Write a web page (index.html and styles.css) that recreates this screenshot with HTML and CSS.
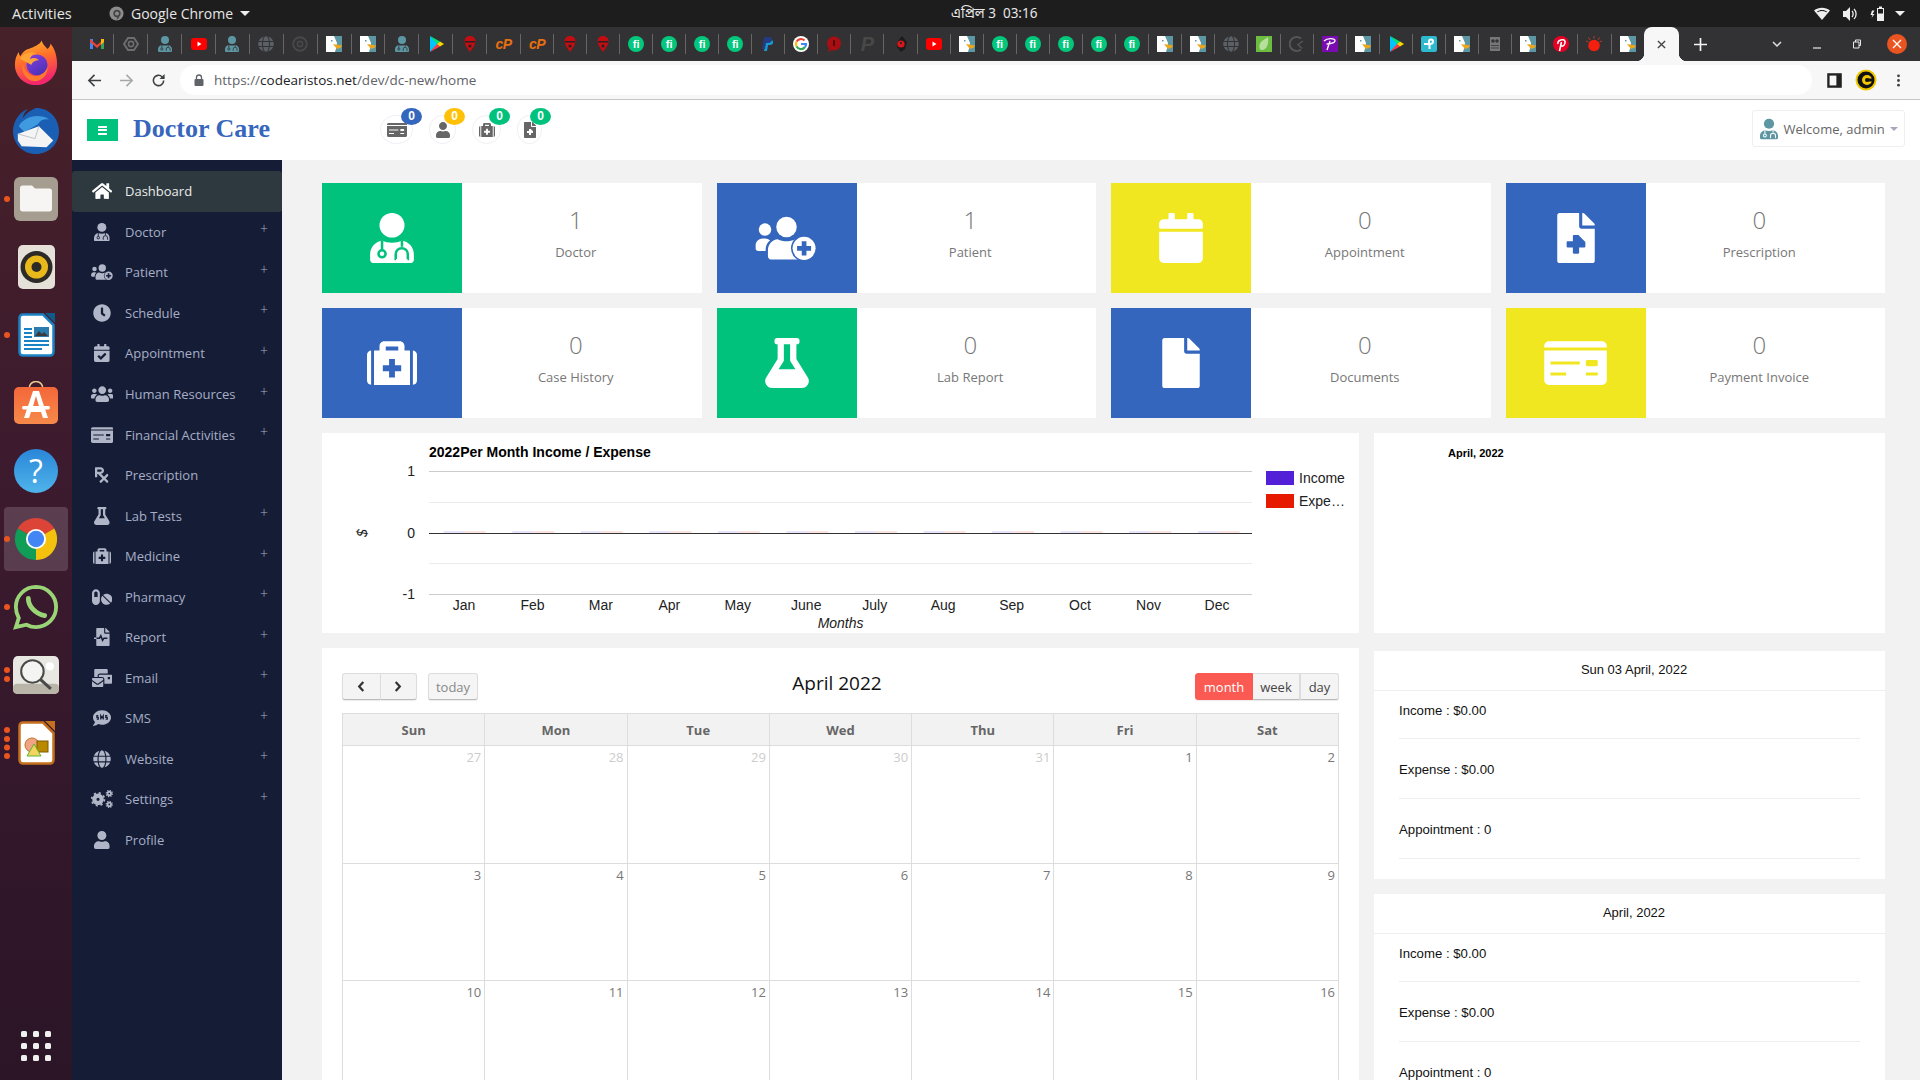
FILE: index.html
```html
<!DOCTYPE html>
<html lang="en">
<head>
<meta charset="utf-8">
<title>Doctor Care</title>
<link rel="stylesheet" href="styles.css">
</head>
<body>
<svg class="sprite" aria-hidden="true">
  <defs>
    <linearGradient id="g-fox" x1="0" y1="0" x2="0.3" y2="1"><stop offset="0" stop-color="#ffc02b"/><stop offset=".5" stop-color="#ff6f2b"/><stop offset="1" stop-color="#f3266e"/></linearGradient>
    <linearGradient id="g-globe" x1="0" y1="0" x2="0.6" y2="1"><stop offset="0" stop-color="#8a3fe0"/><stop offset="1" stop-color="#4c32b8"/></linearGradient>
    <linearGradient id="g-bag" x1="0" y1="0" x2="0" y2="1"><stop offset="0" stop-color="#f4673a"/><stop offset="1" stop-color="#f58a4a"/></linearGradient>
    <linearGradient id="g-help" x1="0" y1="0" x2="0" y2="1"><stop offset="0" stop-color="#2a86d8"/><stop offset="1" stop-color="#4fb4ea"/></linearGradient>
    <pattern id="p-bars" x="53.15" y="0" width="68.55" height="2" patternUnits="userSpaceOnUse"><rect width="21" height="2" fill="#e9e4fa"/><rect x="21" width="21" height="2" fill="#fbe3df"/></pattern>
  </defs>
  <symbol id="i-user" viewBox="0 0 448 512"><path d="M224 256c70.7 0 128-57.3 128-128S294.7 0 224 0 96 57.3 96 128s57.3 128 128 128zm89.6 32h-16.7c-22.2 10.2-46.9 16-72.9 16s-50.6-5.8-72.9-16h-16.7C60.2 288 0 348.2 0 422.4V464c0 26.5 21.5 48 48 48h352c26.5 0 48-21.5 48-48v-41.6c0-74.2-60.2-134.4-134.4-134.4z"/></symbol>
  <symbol id="i-doc" viewBox="0 0 448 512"><ellipse cx="224" cy="126" rx="128" ry="126"/><path d="M0 424c0-72 50-130 122-140 58 26 146 26 204 0 72 10 122 68 122 140v58c0 16-14 30-30 30H30c-16 0-30-14-30-30z"/><g fill="none" style="stroke:var(--cut)" stroke-width="26"><path d="M122 284v92"/><circle cx="122" cy="418" r="36"/><path d="M326 284v62"/><path d="M266 472h-4v-50a60 60 0 0 1 124 0v50h-4"/></g></symbol>
  <symbol id="i-home" viewBox="0 0 576 512"><path d="M280.37 148.26L96 300.11V464a16 16 0 0 0 16 16l112.06-.29a16 16 0 0 0 15.92-16V368a16 16 0 0 1 16-16h64a16 16 0 0 1 16 16v95.64a16 16 0 0 0 16 16.05L464 480a16 16 0 0 0 16-16V300L295.67 148.26a12.19 12.19 0 0 0-15.3 0zM571.6 251.47L488 182.56V44.05a12 12 0 0 0-12-12h-56a12 12 0 0 0-12 12v72.61L318.47 43a48 48 0 0 0-61 0L4.34 251.47a12 12 0 0 0-1.6 16.9l25.5 31A12 12 0 0 0 45.15 301l235.22-193.74a12.19 12.19 0 0 1 15.3 0L530.9 301a12 12 0 0 0 16.9-1.6l25.5-31a12 12 0 0 0-1.7-16.93z"/></symbol>
  <symbol id="i-clock" viewBox="0 0 512 512"><path d="M256,8C119,8,8,119,8,256S119,504,256,504,504,393,504,256,393,8,256,8Zm92.49,313h0l-20,25a16,16,0,0,1-22.49,2.5h0l-67-49.72a40,40,0,0,1-15-31.23V112a16,16,0,0,1,16-16h32a16,16,0,0,1,16,16V256l58,42.5A16,16,0,0,1,348.49,321Z"/></symbol>
  <symbol id="i-users" viewBox="0 0 640 512"><path d="M96 224c35.3 0 64-28.7 64-64s-28.7-64-64-64-64 28.7-64 64 28.7 64 64 64zm448 0c35.3 0 64-28.7 64-64s-28.7-64-64-64-64 28.7-64 64 28.7 64 64 64zm32 32h-64c-17.6 0-33.5 7.1-45.1 18.6 40.3 22.1 68.9 62 75.1 109.4h66c17.7 0 32-14.3 32-32v-32c0-35.3-28.7-64-64-64zm-256 0c61.9 0 112-50.1 112-112S381.9 32 320 32 208 82.1 208 144s50.1 112 112 112zm76.8 32h-8.3c-20.8 10-43.9 16-68.5 16s-47.6-6-68.5-16h-8.3C179.6 288 128 339.6 128 403.2V432c0 26.5 21.5 48 48 48h288c26.5 0 48-21.5 48-48v-28.8c0-63.6-51.6-115.2-115.2-115.2zm-223.7-13.4C161.5 263.1 145.6 256 128 256H64c-35.3 0-64 28.7-64 64v32c0 17.7 14.3 32 32 32h65.9c6.3-47.4 34.9-87.3 75.2-109.4z"/></symbol>
  <symbol id="i-flask" viewBox="0 0 448 512"><path d="M437.2 403.5L320 215V64h8c13.3 0 24-10.7 24-24V24c0-13.3-10.7-24-24-24H120c-13.3 0-24 10.7-24 24v16c0 13.3 10.7 24 24 24h8v151L10.8 403.5C-18.5 450.6 15.3 512 70.9 512h306.2c55.7 0 89.4-61.5 60.1-108.5zM137.9 320l48.2-77.6c3.7-5.2 5.8-11.6 5.8-18.4V64h64v160c0 6.9 2.2 13.2 5.8 18.4l48.2 77.6h-172z"/></symbol>
  <symbol id="i-kit" viewBox="0 0 512 512"><path fill-rule="evenodd" d="M72 128h56V80c0-26 22-48 48-48h160c26 0 48 22 48 48v48h56v352H72zM192 88v40h128V88zM226 216v64h-64v60h64v64h60v-64h64v-60h-64v-64zM0 176a48 48 0 0 1 42-47v350a48 48 0 0 1-42-47zM512 176a48 48 0 0 0-42-47v350a48 48 0 0 0 42-47z"/></symbol>
  <symbol id="i-file" viewBox="0 0 384 512"><path d="M224 136V0H24C10.7 0 0 10.7 0 24v464c0 13.3 10.7 24 24 24h336c13.3 0 24-10.7 24-24V160H248c-13.2 0-24-10.8-24-24zm160-14.1v6.1H256V0h6.1c6.4 0 12.5 2.5 17 7l97.9 98c4.5 4.5 7 10.6 7 16.9z"/></symbol>
  <symbol id="i-filemed" viewBox="0 0 384 512"><path d="M377 105L279.1 7c-4.5-4.5-10.6-7-17-7H256v128h128v-6.1c0-6.3-2.5-12.4-7-16.9zM224 136V0H24C10.7 0 0 10.7 0 24v464c0 13.3 10.7 24 24 24h336c13.3 0 24-10.7 24-24V160H248c-13.2 0-24-10.8-24-24zm64 160v48c0 4.4-3.6 8-8 8h-56v56c0 4.4-3.6 8-8 8h-48c-4.4 0-8-3.6-8-8v-56h-56c-4.4 0-8-3.6-8-8v-48c0-4.4 3.6-8 8-8h56v-56c0-4.4 3.6-8 8-8h48c4.4 0 8 3.6 8 8z"/></symbol>
  <symbol id="i-cal" viewBox="0 0 448 512"><path d="M12 192h424c6.6 0 12 5.4 12 12v260c0 26.5-21.5 48-48 48H48c-26.5 0-48-21.5-48-48V204c0-6.6 5.4-12 12-12zm436-44v-36c0-26.5-21.5-48-48-48h-48V12c0-6.6-5.4-12-12-12h-40c-6.6 0-12 5.4-12 12v52H160V12c0-6.6-5.4-12-12-12h-40c-6.6 0-12 5.4-12 12v52H48C21.5 64 0 85.5 0 112v36c0 6.6 5.4 12 12 12h424c6.6 0 12-5.4 12-12z"/></symbol>
  <symbol id="i-calcheck" viewBox="0 0 448 512"><path d="M436 160H12c-6.627 0-12-5.373-12-12v-36c0-26.51 21.49-48 48-48h48V12c0-6.627 5.373-12 12-12h40c6.627 0 12 5.373 12 12v52h128V12c0-6.627 5.373-12 12-12h40c6.627 0 12 5.373 12 12v52h48c26.51 0 48 21.49 48 48v36c0 6.627-5.373 12-12 12zM12 192h424c6.627 0 12 5.373 12 12v260c0 26.51-21.49 48-48 48H48c-26.51 0-48-21.49-48-48V204c0-6.627 5.373-12 12-12zm333.296 95.947l-28.169-28.398c-4.667-4.705-12.265-4.736-16.97-.068L194.12 364.665l-45.98-46.352c-4.667-4.705-12.266-4.736-16.971-.068l-28.397 28.17c-4.705 4.667-4.736 12.265-.068 16.97l82.601 83.269c4.667 4.705 12.265 4.736 16.97.068l142.953-141.805c4.705-4.667 4.736-12.265.068-16.97z"/></symbol>
  <symbol id="i-card" viewBox="0 0 640 512"><path fill-rule="evenodd" d="M48 32h544c26 0 48 22 48 48v16H0V80c0-26 22-48 48-48zM0 128h640v304c0 26-22 48-48 48H48c-26 0-48-22-48-48zM64 240v32h300v-32zM440 224c-8 0-14 6-14 14v36c0 8 6 14 14 14h94c8 0 14-6 14-14v-36c0-8-6-14-14-14zM64 352v32h160v-32zM426 352v32h122v-32z"/></symbol>
  <symbol id="i-patient" viewBox="0 0 640 512"><circle cx="100" cy="170" r="64"/><path d="M4 330c0-40 34-70 72-70h24c22 0 38 8 52 20-30 24-46 60-46 100v10H30c-14 0-26-12-26-26z"/><circle cx="320" cy="144" r="105"/><path d="M130 380c0-60 46-110 100-112 56 28 120 28 180 0h10c20 0 40 6 50 14v194H160c-16 0-30-14-30-30z"/><circle cx="500" cy="362" r="134" style="fill:var(--cut)"/><circle cx="500" cy="362" r="118"/><path style="fill:var(--cut)" d="M476 290h48v48h48v48h-48v48h-48v-48h-48v-48h48z"/></symbol>
  <symbol id="i-rx" viewBox="0 0 384 512"><path d="M301.26 352l78.06-78.06c6.25-6.25 6.25-16.38 0-22.63l-22.63-22.63c-6.25-6.25-16.38-6.25-22.63 0L256 306.74l-83.96-83.96C219.31 216.8 256 176.89 256 128c0-53.02-42.98-96-96-96H16C7.16 32 0 39.16 0 48v256c0 8.84 7.16 16 16 16h32c8.84 0 16-7.16 16-16v-80h18.75l128 128-78.06 78.06c-6.25 6.25-6.25 16.38 0 22.63l22.63 22.63c6.25 6.25 16.38 6.25 22.63 0L256 397.25l78.06 78.06c6.25 6.25 16.38 6.25 22.63 0l22.63-22.63c6.25-6.25 6.25-16.38 0-22.63L301.26 352zM64 96h96c17.64 0 32 14.36 32 32s-14.36 32-32 32H64V96z"/></symbol>
  <symbol id="i-pills" viewBox="0 0 576 512"><path d="M112 32C50.1 32 0 82.1 0 144v224c0 61.9 50.1 112 112 112s112-50.1 112-112V144c0-61.9-50.1-112-112-112zm48 224H64V144c0-26.5 21.5-48 48-48s48 21.5 48 48v112zm139.7-29.7c-3.5-3.5-9.4-3.1-12.3.8-45.3 62.5-40.4 150.1 15.9 206.4 56.3 56.3 143.9 61.2 206.4 15.9 4-2.9 4.3-8.8.8-12.3L299.7 226.3zm229.8-19c-56.3-56.3-143.9-61.2-206.4-15.9-4 2.9-4.3 8.8-.8 12.3l210.8 210.8c3.5 3.5 9.4 3.1 12.3-.8 45.3-62.6 40.5-150.1-15.9-206.4z"/></symbol>
  <symbol id="i-report" viewBox="0 0 448 512"><path transform="translate(64)" d="M224 136V0H24C10.7 0 0 10.7 0 24v464c0 13.3 10.7 24 24 24h336c13.3 0 24-10.7 24-24V160H248c-13.2 0-24-10.8-24-24zm160-14.1v6.1H256V0h6.1c6.4 0 12.5 2.5 17 7l97.9 98c4.5 4.5 7 10.6 7 16.9z"/><path fill="none" style="stroke:var(--cut)" stroke-width="44" d="M64 290h90l40-70 50 130 40-60h96"/><path d="M0 268h70v44H0z"/></symbol>
  <symbol id="i-mail" viewBox="0 0 576 512"><path d="M160 448c-25.6 0-51.2-22.4-64-32-64-44.8-83.2-60.8-96-70.4V480c0 17.67 14.33 32 32 32h256c17.67 0 32-14.33 32-32V345.6c-12.8 9.6-32 25.6-96 70.4-12.8 9.6-38.4 32-64 32zm128-192H32c-17.67 0-32 14.33-32 32v16c25.6 19.2 22.4 19.2 115.2 86.4 9.6 6.4 28.8 25.6 44.8 25.6s35.2-19.2 44.8-22.4c92.8-67.2 89.6-67.2 115.2-86.4V288c0-17.67-14.33-32-32-32zm256-96H224c-17.67 0-32 14.33-32 32v32h96c33.21 0 60.59 25.42 63.71 57.82l.29-.22V416h192c17.67 0 32-14.33 32-32V192c0-17.67-14.33-32-32-32zm-32 128h-64v-64h64v64zm-352-96c0-35.29 28.71-64 64-64h224V32c0-17.67-14.33-32-32-32H96C78.33 0 64 14.33 64 32v192h96v-32z"/></symbol>
  <symbol id="i-sms" viewBox="0 0 512 512"><path d="M256 32C114.6 32 0 125.1 0 240c0 49.6 21.4 95 57 130.7C44.5 421.1 2.7 466 2.2 466.5c-2.2 2.3-2.8 5.7-1.5 8.7S4.8 480 8 480c66.3 0 116-31.8 140.6-51.4 32.7 12.3 69 19.4 107.4 19.4 141.4 0 256-93.1 256-208S397.4 32 256 32z"/><path fill="none" style="stroke:var(--cut)" stroke-width="34" d="M150 190h-40v50h40v50h-44M220 300V190l36 60 36-60v110M406 190h-44v50h44v50h-44"/></symbol>
  <symbol id="i-globe" viewBox="0 0 496 512"><path d="M336.5 160C322 70.7 287.8 8 248 8s-74 62.7-88.5 152h177zM152 256c0 22.2 1.2 43.5 3.3 64h185.3c2.1-20.5 3.3-41.8 3.3-64s-1.2-43.5-3.3-64H155.3c-2.1 20.5-3.3 41.8-3.3 64zm324.7-96c-28.6-67.9-86.5-120.4-158-141.6 24.4 33.8 41.2 84.7 50 141.6h108zM177.2 18.4C105.8 39.6 47.8 92.1 19.3 160h108c8.7-56.9 25.5-107.8 49.9-141.6zM487.4 192H372.7c2.1 21 3.3 42.5 3.3 64s-1.2 43-3.3 64h114.6c5.5-20.5 8.6-41.8 8.6-64s-3.1-43.5-8.5-64zM120 256c0-21.5 1.2-43 3.3-64H8.6C3.2 212.5 0 233.8 0 256s3.2 43.5 8.6 64h114.6c-2-21-3.2-42.5-3.2-64zm39.5 96c14.5 89.3 48.7 152 88.5 152s74-62.7 88.5-152h-177zm159.3 141.6c71.4-21.2 129.4-73.7 158-141.6h-108c-8.8 56.9-25.6 107.8-50 141.6zM19.3 352c28.6 67.9 86.5 120.4 158 141.6-24.4-33.8-41.2-84.7-50-141.6h-108z"/></symbol>
  <symbol id="i-cogs" viewBox="0 0 640 512"><circle cx="200" cy="265" r="105" fill="none" stroke="currentColor" stroke-width="120"/><circle cx="200" cy="265" r="180" fill="none" stroke="currentColor" stroke-width="52" stroke-dasharray="60 81"/><circle cx="520" cy="100" r="50" fill="none" stroke="currentColor" stroke-width="52"/><circle cx="520" cy="100" r="88" fill="none" stroke="currentColor" stroke-width="34" stroke-dasharray="34 35"/><circle cx="520" cy="410" r="50" fill="none" stroke="currentColor" stroke-width="52"/><circle cx="520" cy="410" r="88" fill="none" stroke="currentColor" stroke-width="34" stroke-dasharray="34 35"/></symbol>

  <symbol id="f-gmail" viewBox="0 0 16 16"><path fill="#4285f4" d="M1 3h3v10H1z"/><path fill="#34a853" d="M12 3h3v10h-3z"/><path fill="#ea4335" d="M1 3l7 6 7-6v3L8 12 1 6z"/><path fill="#fbbc05" d="M12 3l3 0v3l-3 2.5z"/></symbol>
  <symbol id="f-hex" viewBox="0 0 16 16"><path fill="none" stroke="#6d6d6d" stroke-width="2" d="M5 2h6l4 6-4 6H5L1 8z"/><circle cx="8" cy="8" r="2.6" fill="none" stroke="#6d6d6d" stroke-width="1.6"/></symbol>
  <symbol id="f-yt" viewBox="0 0 16 16"><rect y="2" width="16" height="12" rx="3" fill="#f00"/><path fill="#fff" d="M6.5 5.5l4 2.5-4 2.5z"/></symbol>
  <symbol id="f-cdark" viewBox="0 0 16 16"><circle cx="8" cy="8" r="6.8" fill="none" stroke="#484848" stroke-width="2"/><circle cx="8" cy="8" r="2.6" fill="none" stroke="#484848" stroke-width="1.6"/></symbol>
  <symbol id="f-duck" viewBox="0 0 16 16"><rect width="16" height="16" fill="#fff"/><path d="M8 0h8v16H9l1.500-5L11 7z"/><path fill="#eda51a" d="M7 8l9 1.500-1 2-4 1.500z"/><rect x="5" y="4" width="1.500" height="1.500"/></symbol>
  <symbol id="f-play" viewBox="0 0 16 16"><path fill="#00c4ff" d="M2 0l8 8-8 8z"/><path fill="#00e676" d="M2 0l10 5.500L9 8z"/><path fill="#ff3a44" d="M2 16l10-5.500L9 8z"/><path fill="#ffd500" d="M12 5.500L16 8l-4 2.500L9 8z"/></symbol>
  <symbol id="f-red" viewBox="0 0 16 16"><path fill="#c30d12" d="M8 0c3.500 0 5.500 2.500 5.500 5 0 3-2.500 7-5.500 11-3-4-5.500-8-5.500-11C2.500 2.500 4.500 0 8 0z"/><path fill="#222" d="M3 5h10v1.500H3z"/><circle cx="8" cy="10" r="1.500" fill="#222"/></symbol>
  <symbol id="f-pay" viewBox="0 0 16 16"><path fill="#179bd7" d="M6 4h5c3 0 3 5-1 5H8l-1 6H4z"/><path fill="#253b80" d="M4 1h6c3 0 3 6-2 6H6l-1 6H2z"/></symbol>
  <symbol id="f-g" viewBox="0 0 16 16"><circle cx="8" cy="8" r="8" fill="#fff"/><path fill="none" stroke="#ea4335" stroke-width="2.200" d="M3.600 5.500A5 5 0 0 1 11.500 4.500"/><path fill="none" stroke="#fbbc05" stroke-width="2.200" d="M3.600 5.500a5 5 0 0 0 0 5"/><path fill="none" stroke="#34a853" stroke-width="2.200" d="M3.600 10.500a5 5 0 0 0 8.400.500"/><path fill="none" stroke="#4285f4" stroke-width="2.200" d="M12 11a5 5 0 0 0 1-3H8"/></symbol>
  <symbol id="f-redc" viewBox="0 0 16 16"><circle cx="8" cy="7.500" r="7" fill="#a80e12"/><path d="M7 4h2v6H7z" fill="#58090b"/><path d="M3 12l-1 4 4-2z" fill="#a80e12"/></symbol>
  <symbol id="f-eye" viewBox="0 0 16 16"><path fill="#1c1c1c" d="M9 0l5 6-2 7-4 3-4-5 1-6z"/><circle cx="8" cy="8" r="3.600" fill="#d8161b"/><circle cx="8" cy="7" r="1" fill="#222"/></symbol>
  <symbol id="f-leaf" viewBox="0 0 16 16"><rect width="16" height="16" fill="#6dbd43"/><path fill="#b7df9d" d="M12 1c1 6-1 13-6 13-3 0-3.500-5-1-8 2-2.500 5-3 7-5z"/></symbol>
  <symbol id="f-c" viewBox="0 0 16 16"><path fill="none" stroke="#555" stroke-width="2" d="M12 2.500a7 7 0 1 0 0 11"/><path fill="none" stroke="#555" stroke-width="1.500" d="M14 5L9 8.500l4 4"/></symbol>
  <symbol id="f-pp" viewBox="0 0 16 16"><rect width="16" height="16" fill="#7a0bb0"/><path fill="none" stroke="#fff" stroke-width="1.300" d="M2 5c3-3 11-3 11-.5S8 8 4.500 8M8 5L5 14"/></symbol>
  <symbol id="f-tp" viewBox="0 0 16 16"><rect width="16" height="16" rx="2" fill="#2eb9ce"/><path fill="none" stroke="#fff" stroke-width="2" d="M3 8h5V5.500a2 2 0 1 1 4 0C12 7.500 10 8 8.500 8v5"/></symbol>
  <symbol id="f-owl" viewBox="0 0 16 16"><path fill="#777" d="M3 1h10v14H3z"/><circle cx="6" cy="5" r="1.800" fill="#333"/><circle cx="10" cy="5" r="1.800" fill="#333"/><path fill="#444" d="M4 9h8v1H4zM4 11.500h8v1H4z"/></symbol>
  <symbol id="f-pin" viewBox="0 0 16 16"><circle cx="8" cy="8" r="8" fill="#e60023"/><path fill="none" stroke="#fff" stroke-width="1.600" d="M6.500 15L8.500 6M5 8c-1-4 6-6 7-2.500 .6 2.500-1.500 5-3.500 4.500"/></symbol>
  <symbol id="f-bug" viewBox="0 0 16 16"><circle cx="8" cy="9.500" r="5.800" fill="#f51f0f"/><path stroke="#b83a22" stroke-width="1" d="M8 0v2.500M2.500 1.500l1.500 2.500M13.500 1.500L12 4M0 5l2.500 1M16 5l-2.500 1"/></symbol>
</svg>

<div class="desktop">
  <header class="topbar">
    <span class="tb-activities">Activities</span>
    <span class="tb-app">
      <svg class="tb-appicon" viewBox="0 0 16 16"><circle cx="8" cy="8" r="7.500" fill="#8c8c8c"/><circle cx="8.500" cy="8" r="3" fill="none" stroke="#444" stroke-width="1.800"/><path d="M9 11l-1 4 3-3z" fill="#444"/></svg>
      Google Chrome
      <span class="caret-white"></span>
    </span>
    <span class="tb-clock">এপ্রিল 3&nbsp;&nbsp;03:16</span>
    <span class="tb-tray">
      <svg class="tray-icon" viewBox="0 0 16 16"><path fill="#eee" d="M8 14L0 4.500C4.500 .8 11.500 .8 16 4.500z"/><path fill="#1d1d1d" d="M8 4c-2 0-3.700.6-5 1.500l.6.700C5 5.400 6.400 5 8 5s3 .4 4.400 1.200l.6-.7C11.700 4.600 10 4 8 4z"/></svg>
      <svg class="tray-icon" viewBox="0 0 16 16"><path fill="#eee" d="M1 5h3l4-4v14l-4-4H1z"/><path fill="none" stroke="#eee" stroke-width="1.300" d="M10 5c1.500 1.500 1.500 4.500 0 6M12 3c2.800 2.500 2.800 7.500 0 10"/></svg>
      <svg class="tray-icon" viewBox="0 0 16 16"><path fill="#eee" d="M2 4.500h2.500L2.500 8h2l-3 4 1-3H.5zM7 2h7v13H7z"/><rect x="9" y="0.500" width="3" height="2" fill="#eee"/><rect x="8" y="3" width="5" height="4.500" fill="#1d1d1d"/></svg>
      <span class="caret-white caret-tray"></span>
    </span>
  </header>

  <div class="workspace">
    <nav class="dock">
      <div class="dock-item">
        <svg class="dock-svg" viewBox="0 0 48 48"><path fill="url(#g-fox)" d="M24 47C11 47 2 37 2 26c0-7 2.500-11 4-13.500.2 2 .8 3.500 1.800 4.500C10 12 14 9.500 17 9c4-1.500 11-4 13-8.500 .5 3.500 3 5.500 6 9 2.500-2 3-4 3-5.500 4 4 7 11.500 7 21.500 0 11.500-9 21.500-22 21.500z"/><circle cx="25" cy="26" r="11" fill="url(#g-globe)"/><path fill="#ffa436" d="M7 19c5-6 12-7 18-5-4 0-7 3-7 6 3-2 7-1 9 1-4 0-7 2-8 5-2-2-7-3-12-7z"/><path fill="#ff7a2d" d="M10 24c2 10 10 15 17 13 5-1.500 8-5 9-9 1 7-5 15-13 15-9 0-15-9-13-19z"/></svg>
      </div>
      <div class="dock-item">
        <svg class="dock-svg" viewBox="0 0 48 48"><path fill="#1a5fb4" d="M24 0C38 0 48 11 48 24c0 14-11 24-24 24C10 48 0 37 0 24 0 13 8 3 16 1c-4 3-5 6-6 10 4-6 9-9 14-11z"/><path fill="#3f9ae0" d="M6 19C12 9 26 5 38 12c-6-1-10 1-12 5L12 25z"/><path fill="#f4f4f4" d="M5 27l22-8 15 15-7 7-26-1-4-6z"/><path fill="none" stroke="#b9c2cc" stroke-width="1" d="M5 27l18 5 4-13"/></svg>
      </div>
      <div class="dock-item">
        <span class="dock-dot dot-a"></span>
        <svg class="dock-svg dock-44" viewBox="0 0 44 44"><rect width="44" height="44" rx="6" fill="#a59d8f"/><path fill="#f6f5f3" d="M6 11c0-1.500 1-2.500 2.500-2.500H18l3 3h14.500c1.500 0 2.500 1 2.500 2.500v18c0 1.500-1 2.500-2.500 2.500h-27C7 34.500 6 33.500 6 32z"/></svg>
      </div>
      <div class="dock-item">
        <svg class="dock-svg dock-tall" viewBox="0 0 37 44"><rect width="37" height="44" rx="5" fill="#e6e1d8"/><circle cx="18.500" cy="22" r="16" fill="#2d2b28"/><circle cx="18.500" cy="22" r="11.500" fill="#e9b91b"/><circle cx="18.500" cy="22" r="5" fill="#2d2b28"/></svg>
      </div>
      <div class="dock-item">
        <span class="dock-dot dot-a"></span>
        <svg class="dock-svg dock-tall" viewBox="0 0 37 44"><path fill="#fff" stroke="#1b82c4" stroke-width="2.500" d="M1.500 5c0-2 1.500-3.500 3.500-3.500h20L35.500 12v27c0 2-1.500 3.500-3.500 3.500H5c-2 0-3.500-1.500-3.500-3.500z"/><path fill="#0f5a8a" d="M27 0l10 10V0z"/><path fill="#1b82c4" d="M6 15h8v2H6zM6 19h8v2H6zM6 23h8v2H6zM6 27h25v2H6zM6 31h25v2H6zM6 35h18v2H6z"/><rect x="16" y="14" width="15" height="10" fill="#2a7cae"/><path fill="#3a3a3a" d="M17 23l4-5 3 3 2-2 4 4z"/></svg>
      </div>
      <div class="dock-item">
        <svg class="dock-svg dock-44" viewBox="0 0 44 44"><path fill="none" stroke="#f2c98f" stroke-width="1.500" d="M15 8c0-10 14-10 14 0"/><rect y="6" width="44" height="37" rx="5" fill="url(#g-bag)"/><path fill="#fff" d="M19 10h6l9 27h-5l-2-6H17l-2 6h-5zM22 15l-3.500 12h7z"/><rect x="8" y="25" width="28" height="3.500" rx="1.700" fill="#fff"/></svg>
      </div>
      <div class="dock-item">
        <svg class="dock-svg dock-44" viewBox="0 0 44 44"><circle cx="22" cy="22" r="22" fill="url(#g-help)"/><text x="22" y="34" text-anchor="middle" class="help-mark">?</text></svg>
      </div>
      <div class="dock-item">
        <span class="dock-dot dot-a"></span>
        <div class="dock-tile">
          <svg class="dock-svg" viewBox="0 0 48 48"><path fill="#db4437" d="M24 24L4.950 13A22 22 0 0 1 43.050 13z"/><path fill="#f4c20d" d="M24 24L43.050 13A22 22 0 0 1 24 46z"/><path fill="#0f9d58" d="M24 24L24 46A22 22 0 0 1 4.950 13z"/><circle cx="24" cy="24" r="10.500" fill="#fff"/><circle cx="24" cy="24" r="8.500" fill="#4285f4"/></svg>
        </div>
      </div>
      <div class="dock-item">
        <span class="dock-dot dot-a"></span>
        <svg class="dock-svg" viewBox="0 0 48 48"><path fill="none" stroke="#9bd477" stroke-width="4" d="M24 3a21 21 0 0 1 0 42c-4 0-7-1-10-2.500L3 45l3-9.500C4 32 3 28 3 24A21 21 0 0 1 24 3z"/><path fill="none" stroke="#9bd477" stroke-width="5" stroke-linecap="round" d="M16 15c0 8 7 16 17 18"/></svg>
      </div>
      <div class="dock-item">
        <span class="dock-dot dot-b"></span>
        <svg class="dock-svg" viewBox="0 0 45 37"><rect width="45" height="37" rx="5" fill="#e9e7e2"/><rect y="27" width="45" height="10" rx="4" fill="#b9b5a8"/><circle cx="19" cy="15" r="11" fill="#f4f4f2" stroke="#4a4a48" stroke-width="2"/><path stroke="#4a4a48" stroke-width="3" d="M27 23l10 9"/><circle cx="36" cy="10" r="4" fill="#fff"/></svg>
      </div>
      <div class="dock-item">
        <span class="dock-dot dot-c"></span>
        <svg class="dock-svg dock-tall" viewBox="0 0 37 44"><path fill="#fff" stroke="#c5701e" stroke-width="2.500" d="M1.500 5c0-2 1.500-3.500 3.500-3.500h20L35.500 12v27c0 2-1.500 3.500-3.500 3.500H5c-2 0-3.500-1.500-3.500-3.500z"/><path fill="#c5701e" d="M27 0l10 10V0z"/><circle cx="14" cy="24" r="7" fill="#f0a484" stroke="#c5701e"/><rect x="19" y="20" width="11" height="11" fill="#b98a00" stroke="#7a5c00"/><path fill="#f5d361" stroke="#5cb531" d="M16 23l-7 12h14z"/></svg>
      </div>
      <div class="dock-apps">
        <span></span><span></span><span></span><span></span><span></span><span></span><span></span><span></span><span></span>
      </div>
    </nav>

    <div class="browser">
      <div class="tabstrip">
        <div class="tab tab-w"><svg class="fav"><use href="#f-gmail"/></svg></div>
        <div class="tab tab-w"><svg class="fav"><use href="#f-hex"/></svg></div>
        <div class="tab tab-w"><svg class="fav fav-doc"><use href="#i-doc"/></svg></div>
        <div class="tab tab-w"><svg class="fav"><use href="#f-yt"/></svg></div>
        <div class="tab tab-w"><svg class="fav fav-doc"><use href="#i-doc"/></svg></div>
        <div class="tab tab-w"><svg class="fav fav-globe"><use href="#i-globe"/></svg></div>
        <div class="tab tab-w"><svg class="fav"><use href="#f-cdark"/></svg></div>
        <div class="tab tab-w"><svg class="fav"><use href="#f-duck"/></svg></div>
        <div class="tab tab-w"><svg class="fav"><use href="#f-duck"/></svg></div>
        <div class="tab tab-w"><svg class="fav fav-doc"><use href="#i-doc"/></svg></div>
        <div class="tab tab-w"><svg class="fav"><use href="#f-play"/></svg></div>
        <div class="tab tab-w"><svg class="fav"><use href="#f-red"/></svg></div>
        <div class="tab tab-w"><span class="fav-cp">cP</span></div>
        <div class="tab"><span class="fav-cp">cP</span></div>
        <div class="tab"><svg class="fav"><use href="#f-red"/></svg></div>
        <div class="tab"><svg class="fav"><use href="#f-red"/></svg></div>
        <div class="tab"><span class="fav-fi">fi</span></div>
        <div class="tab"><span class="fav-fi">fi</span></div>
        <div class="tab"><span class="fav-fi">fi</span></div>
        <div class="tab"><span class="fav-fi">fi</span></div>
        <div class="tab"><svg class="fav"><use href="#f-pay"/></svg></div>
        <div class="tab"><svg class="fav"><use href="#f-g"/></svg></div>
        <div class="tab"><svg class="fav"><use href="#f-redc"/></svg></div>
        <div class="tab"><span class="fav-p">P</span></div>
        <div class="tab"><svg class="fav"><use href="#f-eye"/></svg></div>
        <div class="tab"><svg class="fav"><use href="#f-yt"/></svg></div>
        <div class="tab"><svg class="fav"><use href="#f-duck"/></svg></div>
        <div class="tab"><span class="fav-fi">fi</span></div>
        <div class="tab"><span class="fav-fi">fi</span></div>
        <div class="tab"><span class="fav-fi">fi</span></div>
        <div class="tab"><span class="fav-fi">fi</span></div>
        <div class="tab"><span class="fav-fi">fi</span></div>
        <div class="tab"><svg class="fav"><use href="#f-duck"/></svg></div>
        <div class="tab"><svg class="fav"><use href="#f-duck"/></svg></div>
        <div class="tab"><svg class="fav fav-globe"><use href="#i-globe"/></svg></div>
        <div class="tab"><svg class="fav"><use href="#f-leaf"/></svg></div>
        <div class="tab"><svg class="fav"><use href="#f-c"/></svg></div>
        <div class="tab"><svg class="fav"><use href="#f-pp"/></svg></div>
        <div class="tab"><svg class="fav"><use href="#f-duck"/></svg></div>
        <div class="tab"><svg class="fav"><use href="#f-play"/></svg></div>
        <div class="tab"><svg class="fav"><use href="#f-tp"/></svg></div>
        <div class="tab"><svg class="fav"><use href="#f-duck"/></svg></div>
        <div class="tab"><svg class="fav"><use href="#f-owl"/></svg></div>
        <div class="tab"><svg class="fav"><use href="#f-duck"/></svg></div>
        <div class="tab"><svg class="fav"><use href="#f-pin"/></svg></div>
        <div class="tab"><svg class="fav"><use href="#f-bug"/></svg></div>
        <div class="tab tab-last"><svg class="fav"><use href="#f-duck"/></svg></div>
        <div class="tab-active">
          <svg class="tab-x" viewBox="0 0 10 10"><path stroke="#444" stroke-width="1.500" d="M1 1l8 8M9 1l-8 8"/></svg>
        </div>
        <svg class="tab-new" viewBox="0 0 14 14"><path stroke="#f4f4f4" stroke-width="1.800" d="M7 0v14M0 7h14"/></svg>
        <div class="win-controls">
          <span class="win-btn"><svg class="win-glyph" viewBox="0 0 10 6"><path fill="none" stroke="#e0e0e0" stroke-width="1.500" d="M1 1l4 4 4-4"/></svg></span>
          <span class="win-btn"><svg class="win-glyph" viewBox="0 0 10 10"><path stroke="#e8e8e8" stroke-width="1.200" d="M1 9h8"/></svg></span>
          <span class="win-btn"><svg class="win-glyph" viewBox="0 0 10 10"><path fill="none" stroke="#e8e8e8" d="M1.500 3h5.500v6H1.500zM3.500 3V1h5v5.500H7"/></svg></span>
          <span class="win-btn"><span class="win-close"><svg class="win-glyph" viewBox="0 0 10 10"><path stroke="#fff" stroke-width="1.300" d="M1 1l8 8M9 1l-8 8"/></svg></span></span>
        </div>
      </div>

      <div class="toolbar">
        <span class="tool-btn"><svg class="tool-svg" viewBox="0 0 16 16"><path fill="none" stroke="#3c4043" stroke-width="1.700" d="M15 8H2M8 2L2 8l6 6"/></svg></span>
        <span class="tool-btn"><svg class="tool-svg" viewBox="0 0 16 16"><path fill="none" stroke="#a5a8ab" stroke-width="1.700" d="M1 8h13M8 2l6 6-6 6"/></svg></span>
        <span class="tool-btn"><svg class="tool-svg" viewBox="0 0 16 16"><path fill="none" stroke="#3c4043" stroke-width="1.700" d="M13.500 8a5.500 5.500 0 1 1-1.700-4"/><path fill="#3c4043" d="M14.500 1v5.500H9z"/></svg></span>
        <div class="omnibox">
          <svg class="lock" viewBox="0 0 10 12"><path fill="none" stroke="#5f6368" stroke-width="1.300" d="M2.500 5V3.500a2.500 2.500 0 0 1 5 0V5"/><rect x="0.500" y="5" width="9" height="7" rx="1" fill="#5f6368"/></svg>
          <span class="url"><span class="url-dim">https://</span>codearistos.net<span class="url-dim">/dev/dc-new/home</span></span>
        </div>
        <span class="tool-btn"><svg class="tool-svg" viewBox="0 0 16 16"><rect x="1.500" y="1.500" width="13" height="13" fill="none" stroke="#222" stroke-width="2.500"/><rect x="10" y="1" width="5" height="14" fill="#222"/></svg></span>
        <span class="tool-btn"><svg class="avatar" viewBox="0 0 22 22"><circle cx="11" cy="11" r="10.500" fill="#f0c800"/><circle cx="11" cy="11" r="8.500" fill="#111"/><circle cx="12" cy="11" r="5" fill="#f0c800"/><circle cx="12" cy="11" r="2" fill="#111"/><rect x="12" y="9.500" width="6" height="3" fill="#111"/></svg></span>
        <span class="tool-btn"><svg class="tool-svg" viewBox="0 0 16 16"><circle cx="8" cy="3" r="1.500" fill="#3c4043"/><circle cx="8" cy="8" r="1.500" fill="#3c4043"/><circle cx="8" cy="13" r="1.500" fill="#3c4043"/></svg></span>
      </div>

      <div class="app">
        <div class="app-header">
          <button class="hamburger" type="button"><span></span><span></span><span></span></button>
          <h1 class="brand">Doctor Care</h1>
          <div class="quick-icons">
            <span class="quick"><svg class="q-icon q-card"><use href="#i-card"/></svg><b class="q-badge b-blue">0</b></span>
            <span class="quick"><svg class="q-icon q-user"><use href="#i-user"/></svg><b class="q-badge b-amber">0</b></span>
            <span class="quick"><svg class="q-icon q-kit"><use href="#i-kit"/></svg><b class="q-badge b-green">0</b></span>
            <span class="quick"><svg class="q-icon q-file"><use href="#i-filemed"/></svg><b class="q-badge b-green">0</b></span>
          </div>
          <div class="welcome">
            <svg class="welcome-icon"><use href="#i-doc"/></svg>
            <span>Welcome, admin</span>
            <span class="caret-grey"></span>
          </div>
        </div>

        <div class="app-body">
          <aside class="sidebar">
            <a class="nav-row nav-active"><span class="nav-ico"><svg class="ni ni-home"><use href="#i-home"/></svg></span><span class="nav-label">Dashboard</span></a>
            <a class="nav-row"><span class="nav-ico"><svg class="ni ni-448"><use href="#i-doc"/></svg></span><span class="nav-label">Doctor</span><span class="nav-plus">+</span></a>
            <a class="nav-row"><span class="nav-ico"><svg class="ni ni-640"><use href="#i-patient"/></svg></span><span class="nav-label">Patient</span><span class="nav-plus">+</span></a>
            <a class="nav-row"><span class="nav-ico"><svg class="ni ni-512"><use href="#i-clock"/></svg></span><span class="nav-label">Schedule</span><span class="nav-plus">+</span></a>
            <a class="nav-row"><span class="nav-ico"><svg class="ni ni-448"><use href="#i-calcheck"/></svg></span><span class="nav-label">Appointment</span><span class="nav-plus">+</span></a>
            <a class="nav-row"><span class="nav-ico"><svg class="ni ni-640"><use href="#i-users"/></svg></span><span class="nav-label">Human Resources</span><span class="nav-plus">+</span></a>
            <a class="nav-row"><span class="nav-ico"><svg class="ni ni-640"><use href="#i-card"/></svg></span><span class="nav-label">Financial Activities</span><span class="nav-plus">+</span></a>
            <a class="nav-row"><span class="nav-ico"><svg class="ni ni-384"><use href="#i-rx"/></svg></span><span class="nav-label">Prescription</span></a>
            <a class="nav-row"><span class="nav-ico"><svg class="ni ni-448"><use href="#i-flask"/></svg></span><span class="nav-label">Lab Tests</span><span class="nav-plus">+</span></a>
            <a class="nav-row"><span class="nav-ico"><svg class="ni ni-512"><use href="#i-kit"/></svg></span><span class="nav-label">Medicine</span><span class="nav-plus">+</span></a>
            <a class="nav-row"><span class="nav-ico"><svg class="ni ni-home"><use href="#i-pills"/></svg></span><span class="nav-label">Pharmacy</span><span class="nav-plus">+</span></a>
            <a class="nav-row"><span class="nav-ico"><svg class="ni ni-448"><use href="#i-report"/></svg></span><span class="nav-label">Report</span><span class="nav-plus">+</span></a>
            <a class="nav-row"><span class="nav-ico"><svg class="ni ni-home"><use href="#i-mail"/></svg></span><span class="nav-label">Email</span><span class="nav-plus">+</span></a>
            <a class="nav-row"><span class="nav-ico"><svg class="ni ni-512"><use href="#i-sms"/></svg></span><span class="nav-label">SMS</span><span class="nav-plus">+</span></a>
            <a class="nav-row"><span class="nav-ico"><svg class="ni ni-512"><use href="#i-globe"/></svg></span><span class="nav-label">Website</span><span class="nav-plus">+</span></a>
            <a class="nav-row"><span class="nav-ico"><svg class="ni ni-640"><use href="#i-cogs"/></svg></span><span class="nav-label">Settings</span><span class="nav-plus">+</span></a>
            <a class="nav-row"><span class="nav-ico"><svg class="ni ni-448"><use href="#i-user"/></svg></span><span class="nav-label">Profile</span></a>
          </aside>

          <main class="main">
            <section class="tiles">
              <div class="tile"><div class="tile-icon c-green"><svg class="ti ti-448"><use href="#i-doc"/></svg></div><div class="tile-body"><div class="tile-num">1</div><div class="tile-label">Doctor</div></div></div>
              <div class="tile"><div class="tile-icon c-blue"><svg class="ti ti-640"><use href="#i-patient"/></svg></div><div class="tile-body"><div class="tile-num">1</div><div class="tile-label">Patient</div></div></div>
              <div class="tile"><div class="tile-icon c-yellow"><svg class="ti ti-448"><use href="#i-cal"/></svg></div><div class="tile-body"><div class="tile-num">0</div><div class="tile-label">Appointment</div></div></div>
              <div class="tile"><div class="tile-icon c-blue"><svg class="ti ti-384"><use href="#i-filemed"/></svg></div><div class="tile-body"><div class="tile-num">0</div><div class="tile-label">Prescription</div></div></div>
              <div class="tile"><div class="tile-icon c-blue"><svg class="ti ti-512"><use href="#i-kit"/></svg></div><div class="tile-body"><div class="tile-num">0</div><div class="tile-label">Case History</div></div></div>
              <div class="tile"><div class="tile-icon c-green"><svg class="ti ti-448"><use href="#i-flask"/></svg></div><div class="tile-body"><div class="tile-num">0</div><div class="tile-label">Lab Report</div></div></div>
              <div class="tile"><div class="tile-icon c-blue"><svg class="ti ti-384"><use href="#i-file"/></svg></div><div class="tile-body"><div class="tile-num">0</div><div class="tile-label">Documents</div></div></div>
              <div class="tile"><div class="tile-icon c-yellow"><svg class="ti ti-640"><use href="#i-card"/></svg></div><div class="tile-body"><div class="tile-num">0</div><div class="tile-label">Payment Invoice</div></div></div>
            </section>

            <section class="lower">
              <div class="col">
                <div class="panel chart-panel">
                  <svg class="chart" viewBox="0 0 1037 200">
                    <text x="107" y="24" class="ch-title">2022Per Month Income / Expense</text>
                    <g stroke-width="1">
                      <path stroke="#ccc" d="M107 38.500h823M107 161.500h823"/>
                      <path stroke="#ebebeb" d="M107 69.500h823M107 130.500h823"/>
                    </g>
                    <rect x="107" y="98" width="823" height="2" fill="url(#p-bars)"/>
                    <path stroke="#333" d="M107 100.500h823"/>
                    <g class="ch-text" text-anchor="end">
                      <text x="93" y="43">1</text><text x="93" y="105">0</text><text x="93" y="166">-1</text>
                    </g>
                    <g class="ch-text" text-anchor="middle">
                      <text x="142" y="177">Jan</text><text x="210.450" y="177">Feb</text><text x="278.900" y="177">Mar</text><text x="347.350" y="177">Apr</text><text x="415.800" y="177">May</text><text x="484.250" y="177">June</text><text x="552.700" y="177">July</text><text x="621.150" y="177">Aug</text><text x="689.600" y="177">Sep</text><text x="758" y="177">Oct</text><text x="826.500" y="177">Nov</text><text x="895" y="177">Dec</text>
                      <text x="518.600" y="195" class="ch-italic">Months</text>
                      <text transform="translate(45 100) rotate(-90)" class="ch-italic">$</text>
                    </g>
                    <rect x="944" y="38" width="28" height="14" fill="#5220d6"/>
                    <text x="977" y="50" class="ch-text">Income</text>
                    <rect x="944" y="61" width="28" height="14" fill="#e61a00"/>
                    <text x="977" y="73" class="ch-text">Expe…</text>
                  </svg>
                </div>

                <div class="panel calendar">
                  <div class="cal-toolbar">
                    <div class="cal-left">
                      <div class="btn-group"><button class="fc-btn fc-arrow" type="button"><svg class="fc-chev" viewBox="0 0 8 12"><path fill="none" stroke="#333" stroke-width="2.400" d="M6.500 1L2 6l4.500 5"/></svg></button><button class="fc-btn fc-arrow" type="button"><svg class="fc-chev" viewBox="0 0 8 12"><path fill="none" stroke="#333" stroke-width="2.400" d="M1.500 1L6 6l-4.500 5"/></svg></button></div>
                      <button class="fc-btn fc-today" type="button">today</button>
                    </div>
                    <h2 class="cal-title">April 2022</h2>
                    <div class="btn-group"><button class="fc-btn fc-month" type="button">month</button><button class="fc-btn fc-week" type="button">week</button><button class="fc-btn fc-day" type="button">day</button></div>
                  </div>
                  <table class="cal-grid">
                    <thead><tr><th>Sun</th><th>Mon</th><th>Tue</th><th>Wed</th><th>Thu</th><th>Fri</th><th>Sat</th></tr></thead>
                    <tbody>
                      <tr><td class="other">27</td><td class="other">28</td><td class="other">29</td><td class="other">30</td><td class="other">31</td><td>1</td><td>2</td></tr>
                      <tr><td>3</td><td>4</td><td>5</td><td>6</td><td>7</td><td>8</td><td>9</td></tr>
                      <tr><td>10</td><td>11</td><td>12</td><td>13</td><td>14</td><td>15</td><td>16</td></tr>
                    </tbody>
                  </table>
                </div>
              </div>

              <div class="col">
                <div class="panel pie-panel"><span class="pie-title">April, 2022</span></div>
                <div class="panel summary summary-first">
                  <div class="summary-head">Sun 03 April, 2022</div>
                  <ul class="summary-list"><li>Income : $0.00</li><li>Expense : $0.00</li><li>Appointment : 0</li></ul>
                </div>
                <div class="panel summary">
                  <div class="summary-head">April, 2022</div>
                  <ul class="summary-list"><li>Income : $0.00</li><li>Expense : $0.00</li><li>Appointment : 0</li></ul>
                </div>
              </div>
            </section>
          </main>
        </div>
      </div>
    </div>
  </div>
</div>
</body>
</html>
```
FILE: styles.css
```css
* { box-sizing: border-box; }
html, body { margin: 0; padding: 0; height: 1080px; overflow: hidden; }
body { font-family: "Open Sans", "Noto Sans", sans-serif; font-size: 13px; color: #777; background: #1d1d1d; }
.sprite { position: absolute; width: 0; height: 0; overflow: hidden; }
svg { display: block; flex: none; }
.fav, .ni, .ti, .q-icon, .welcome-icon { fill: currentColor; }

.desktop { height: 1080px; display: flex; flex-direction: column; overflow: hidden; }

/* GNOME top bar */
.topbar { height: 27px; flex: none; background: #1d1d1d; color: #e6e6e6; display: flex; align-items: center; position: relative; font-size: 14px; }
.tb-activities { margin-left: 12px; width: 97px; font-size: 14.500px; white-space: nowrap; }
.tb-app { display: flex; align-items: center; gap: 7px; }
.tb-appicon { width: 15px; height: 15px; }
.caret-white { width: 0; height: 0; border-left: 5px solid transparent; border-right: 5px solid transparent; border-top: 5px solid #eee; }
.caret-tray { margin-left: -2.500px; }
.tb-clock { margin-left: 701px; font-size: 13.500px; font-family: "Noto Sans", "Noto Sans Bengali", "Lohit Bengali", "FreeSans", sans-serif; width: 88px; white-space: nowrap; }
.tb-tray { margin-left: auto; display: flex; align-items: center; gap: 12px; padding-right: 15px; }
.tray-icon { width: 16px; height: 16px; }

.workspace { flex: 1; display: flex; min-height: 0; }

/* dock */
.dock { width: 72px; flex: none; display: flex; flex-direction: column; align-items: center; padding-top: 2px; background: linear-gradient(180deg, #472129 0%, #3c1a2e 45%, #2b1527 100%); }
.dock-item { width: 72px; height: 68px; flex: none; display: flex; align-items: center; justify-content: center; position: relative; }
.dock-tile { width: 64px; height: 64px; border-radius: 4px; background: rgba(255,255,255,.16); display: flex; align-items: center; justify-content: center; }
.dock-svg { width: 46px; height: 46px; }
.dock-44 { width: 44px; height: 44px; }
.dock-tall { width: 37px; height: 44px; }
.dock-dot { position: absolute; left: 4px; top: 31px; width: 6px; height: 6px; border-radius: 50%; background: #e95420; }
.dot-b { top: 26px; box-shadow: 0 9px 0 #e95420; }
.dot-c { top: 18px; box-shadow: 0 9px 0 #e95420, 0 17.500px 0 #e95420, 0 26px 0 #e95420; }
.dock-apps { margin-top: auto; margin-bottom: 19px; display: grid; grid-template-columns: repeat(3, 6px); gap: 6px; }
.dock-apps span { width: 6px; height: 6px; border-radius: 1.500px; background: #f0f0f0; }
.help-mark { font: 32px "Open Sans", sans-serif; fill: #fff; }

/* browser */
.browser { flex: 1; min-width: 0; display: flex; flex-direction: column; }
.tabstrip { height: 34px; flex: none; background: #323234; display: flex; align-items: center; padding-left: 8.4px; }
.tab { width: 33.05px; height: 20px; flex: none; border-right: 1px solid #666; display: flex; align-items: center; justify-content: center; color: #5d97a3; }
.tab-w { width: 33.9px; }
.tab-last { border-right: 0; width: 32px; }
.fav { width: 16px; height: 16px; overflow: visible; --cut: #323234; }
.fav-doc { width: 14px; }
.fav-globe { color: #5b6066; }
.fav-fi { width: 16px; height: 16px; border-radius: 50%; background: #02c77c; color: #fff; font: 700 11px/16px "Liberation Sans", sans-serif; text-align: center; }
.fav-cp { font: italic 700 14px/16px "Liberation Sans", sans-serif; color: #e8700f; letter-spacing: -.5px; }
.fav-p { font: italic 700 20px/20px "Liberation Sans", sans-serif; color: #484848; }
.tab-active { width: 35px; height: 34px; flex: none; align-self: flex-end; background: #f7f7f7; border-radius: 8px 8px 0 0; display: flex; align-items: center; justify-content: center; position: relative; }
.tab-active::before, .tab-active::after { content: ""; position: absolute; bottom: 0; width: 8px; height: 8px; }
.tab-active::before { left: -8px; background: radial-gradient(circle at 0 0, transparent 8px, #f7f7f7 8.500px); }
.tab-active::after { right: -8px; background: radial-gradient(circle at 100% 0, transparent 8px, #f7f7f7 8.500px); }
.tab-x { width: 9px; height: 9px; }
.tab-new { width: 13px; height: 13px; margin-left: 15px; }
.win-controls { margin-left: auto; display: flex; align-items: center; padding-right: 3px; }
.win-btn { width: 40px; height: 34px; display: flex; align-items: center; justify-content: center; }
.win-glyph { width: 10px; height: 10px; }
.win-close { width: 20px; height: 20px; border-radius: 50%; background: #e95420; display: flex; align-items: center; justify-content: center; }

.toolbar { height: 39px; flex: none; background: #f7f7f7; border-bottom: 1px solid #c6c6c6; display: flex; align-items: center; padding-left: 6px; padding-right: 6px; }
.tool-btn { width: 32px; height: 32px; flex: none; display: flex; align-items: center; justify-content: center; }
.tool-svg { width: 15px; height: 15px; }
.avatar { width: 22px; height: 22px; }
.omnibox { flex: 1; height: 30px; margin: 0 6px; background: #fff; border-radius: 15px; display: flex; align-items: center; padding-left: 14px; gap: 10px; }
.lock { width: 10px; height: 12px; }
.url { font-size: 13.500px; color: #202124; font-family: "Open Sans", sans-serif; white-space: nowrap; }
.url-dim { color: #5f6368; }

/* app */
.app { flex: 1; min-height: 0; display: flex; flex-direction: column; background: #f2f2f2; }
.app-header { height: 60px; flex: none; background: #fff; display: flex; align-items: center; padding-left: 15px; padding-right: 15.500px; }
.hamburger { width: 31px; height: 22px; border: 0; padding: 0; background: #00c27c; display: flex; flex-direction: column; align-items: center; justify-content: center; gap: 1.500px; }
.hamburger span { width: 9px; height: 2px; background: #fff; }
.brand { margin: -2px 0 0 15px; font: 700 26px "Liberation Serif", serif; color: #3766bd; width: 247px; white-space: nowrap; }
.quick-icons { display: flex; gap: 16px; margin-top: -1px; }
.quick { height: 29px; padding: 0 5.500px; border: 1px solid #f0f0f6; border-radius: 50%; display: flex; align-items: center; position: relative; color: #666; --cut: #fff; }
.q-icon { height: 16px; }
.q-card { width: 20px; }
.q-user { width: 14px; }
.q-kit { width: 16px; }
.q-file { width: 12px; }
.q-badge { position: absolute; right: -10px; top: -8px; width: 21px; height: 17px; border-radius: 50%; color: #fff; font-size: 12px; font-weight: 700; line-height: 17px; text-align: center; font-family: "Liberation Sans", sans-serif; }
.b-blue { background: #3566bd; }
.b-amber { background: #ffc107; }
.b-green { background: #00c27c; }
.welcome { margin-left: auto; margin-top: -3px; height: 37px; width: 153px; border: 1px solid #eee; border-radius: 3px; display: flex; align-items: center; padding-left: 7px; color: #666; white-space: nowrap; --cut: #fff; }
.welcome-icon { width: 18px; height: 22px; color: #5d97a3; margin-right: 6px; }
.caret-grey { width: 0; height: 0; border-left: 4px solid transparent; border-right: 4px solid transparent; border-top: 4px solid #a9a5bd; margin-left: 5px; }

.app-body { flex: 1; min-height: 0; display: flex; }
.sidebar { width: 210px; flex: none; background: #151d36; padding-top: 11px; --cut: #151d36; }
.nav-row { height: 40.560px; display: flex; align-items: center; padding-left: 12px; color: #a7aec6; }
.nav-active { background: #2d393e; border-radius: 3px; color: #ececec; }
.nav-ico { width: 36px; display: flex; justify-content: center; color: #b0b6c8; }
.nav-active .nav-ico { color: #fff; }
.ni { height: 18px; }
.ni-home { width: 20.250px; }
.ni-448 { width: 15.750px; }
.ni-384 { width: 13.500px; }
.ni-512 { width: 18px; }
.ni-640 { width: 22.500px; }
.nav-label { margin-left: 5px; white-space: nowrap; }
.nav-plus { margin-left: auto; margin-right: 14px; margin-bottom: 6px; font-size: 14px; font-weight: 300; color: #a7aec6; }

.main { flex: 1; min-width: 0; padding: 23px 35px 0 40px; overflow: hidden; }
.tiles { display: grid; grid-template-columns: repeat(4, 1fr); gap: 15px; }
.tile { height: 110px; background: #fff; display: flex; }
.tile-icon { width: 140px; flex: none; display: flex; align-items: center; justify-content: center; color: #fff; }
.c-green { background: #00c27c; --cut: #00c27c; }
.c-blue { background: #3566bd; --cut: #3566bd; }
.c-yellow { background: #f1e721; --cut: #f1e721; }
.ti { height: 50px; }
.ti-448 { width: 44px; }
.ti-384 { width: 38px; }
.ti-512 { width: 50px; }
.ti-640 { width: 63px; }
.tile-body { flex: 1; text-align: center; padding-right: 12px; color: #777; }
.tile-num { font-size: 24px; line-height: 33px; margin-top: 20px; font-weight: 300; }
.tile-label { font-size: 13px; line-height: 18px; margin-top: 7px; }

.lower { display: grid; grid-template-columns: 1037px 511px; gap: 15px; margin-top: 15px; }
.col { display: flex; flex-direction: column; gap: 15px; min-width: 0; }
.panel { background: #fff; }
.chart-panel { height: 200px; }
.chart { width: 1037px; height: 200px; }
.ch-title { font: 700 14px "Liberation Sans", sans-serif; fill: #000; }
.ch-text { font: 14px "Liberation Sans", sans-serif; fill: #222; }
.ch-italic { font-style: italic; }

.calendar { padding: 25px 20px 0 20px; height: 600px; }
.cal-toolbar { height: 27px; display: flex; justify-content: space-between; align-items: flex-start; position: relative; margin-bottom: 13px; }
.cal-left { display: flex; gap: 11px; }
.btn-group { display: flex; }
.fc-btn { height: 27px; border: 1px solid #ddd; border-bottom-color: #bbb; background: #f4f4f4; border-radius: 0; padding: 0; font: 13px "Open Sans", sans-serif; color: #444; box-shadow: 0 1px 1px rgba(0,0,0,.08); display: flex; align-items: center; justify-content: center; }
.fc-arrow { width: 37.500px; }
.fc-chev { width: 8px; height: 11px; }
.fc-arrow:first-child { border-radius: 3px 0 0 3px; border-right: 0; }
.fc-arrow:last-child { border-radius: 0 3px 3px 0; }
.fc-today { width: 50px; border-radius: 3px; color: #888; background: #f5f5f5; }
.cal-title { margin: -2px 0 0; font: 400 19px/24px "Open Sans", sans-serif; color: #111; position: absolute; left: 0; right: 0; text-align: center; width: 990px; pointer-events: none; }
.fc-month { width: 58px; background: #fb5a52; border-color: #fb5a52; color: #fff; border-radius: 3px 0 0 3px; }
.fc-week { width: 47px; border-left: 0; }
.fc-day { width: 39px; border-left: 1px solid #ddd; border-radius: 0 3px 3px 0; }

.cal-grid { width: 997px; table-layout: fixed; border-collapse: collapse; }
.cal-grid th { height: 32px; background: #f2f2f2; border: 1px solid #ddd; color: #666; font-size: 13px; font-weight: 700; text-align: center; padding: 0; }
.cal-grid td { height: 117.500px; border: 1px solid #ddd; vertical-align: top; text-align: right; padding: 2px 3px 0 0; font-size: 13px; line-height: 18px; color: #777; }
.cal-grid td.other { color: #ccc; }

.pie-panel { height: 200px; padding: 9.500px 0 0 74px; }
.pie-title { font: 700 11px/14px "Liberation Sans", sans-serif; color: #000; }
.summary-first { margin-top: 3px; }
.summary { height: 228px; color: #111; }
.summary-head { height: 40px; border-bottom: 1px solid #eee; text-align: center; padding-left: 9px; font: 13px/38px "Liberation Sans", sans-serif; }
.summary-list { margin: 0; padding: 0 25px; list-style: none; font: 13.200px/19px "Liberation Sans", sans-serif; }
.summary-list li { padding: 21px 0 19px; border-bottom: 1px solid #eee; }
.summary-list li:first-child { padding: 10px 0 18px; }
```
